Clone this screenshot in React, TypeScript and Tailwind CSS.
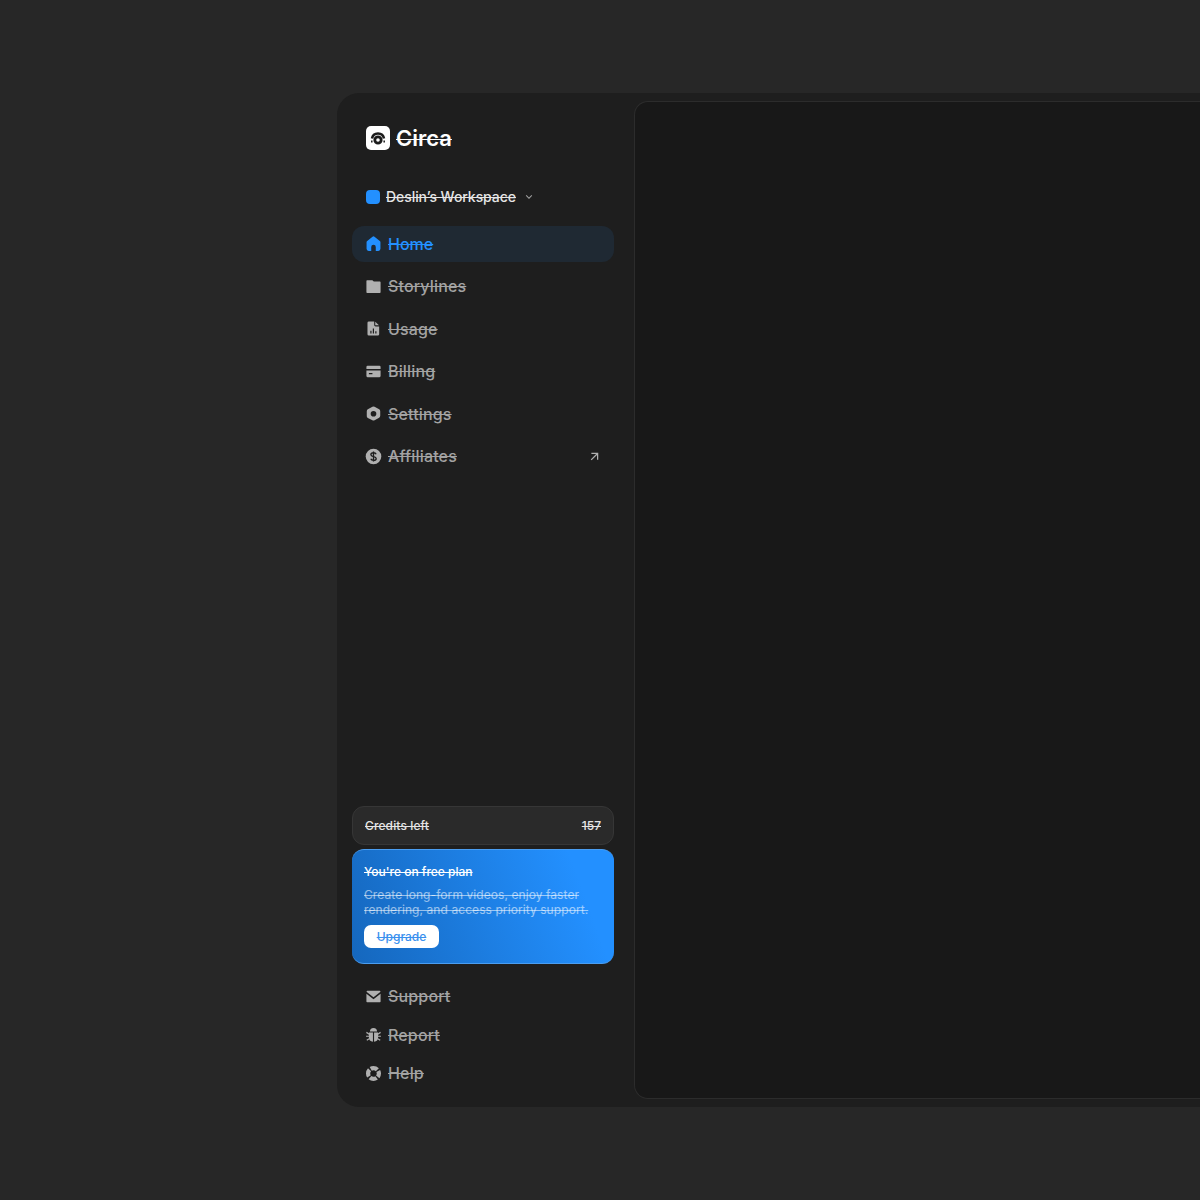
import { RiArrowDownSLine, RiArrowRightUpLine, RiFolderFill } from "react-icons/ri";
import type { ComponentType } from "react";

type IconProps = { className?: string };

function HomeIcon({ className }: IconProps) {
  return (
    <svg viewBox="0 0 24 24" className={className} fill="currentColor">
      <path d="M10.600 2.500a2.200 2.200 0 0 1 2.800 0l7.500 6a2 2 0 0 1 .9 1.700V19.500a3 3 0 0 1-3 3h-3.600v-5.500a3.200 3.200 0 0 0-6.400 0v5.500H5.200a3 3 0 0 1-3-3v-9.300a2 2 0 0 1 .9-1.700z" />
    </svg>
  );
}

function UsageIcon({ className }: IconProps) {
  return (
    <svg viewBox="0 0 24 24" className={className} fill="currentColor" fillRule="evenodd">
      <path d="M5.500 2H13v5a2 2 0 0 0 2 2h5v11a2 2 0 0 1-2 2H5.500a2 2 0 0 1-2-2V4a2 2 0 0 1 2-2zM7.500 15v4h1.700v-4zM11 12v7h1.700v-7zM14.500 16v3h1.700v-3z" />
      <path d="M14.500 2.300 19.700 7.500H15a.5.5 0 0 1-.5-.5z" />
    </svg>
  );
}

function CardIcon({ className }: IconProps) {
  return (
    <svg viewBox="0 0 24 24" className={className} fill="currentColor" fillRule="evenodd">
      <path d="M3.500 4h17a1.500 1.500 0 0 1 1.500 1.500V8.500H2V5.500A1.500 1.500 0 0 1 3.500 4z" />
      <path d="M2 10.500h20v8a1.500 1.500 0 0 1-1.500 1.500h-17A1.500 1.500 0 0 1 2 18.500zM5.500 14v1.800h5V14z" />
    </svg>
  );
}

function SettingsIcon({ className }: IconProps) {
  return (
    <svg viewBox="0 0 24 24" className={className} fill="currentColor" fillRule="evenodd">
      <path d="M10.500 2.400a3 3 0 0 1 3 0l6.500 3.700a3 3 0 0 1 1.500 2.600v6.600a3 3 0 0 1-1.500 2.600l-6.500 3.700a3 3 0 0 1-3 0L4 18.500a3 3 0 0 1-1.500-2.600V8.700A3 3 0 0 1 4 6.100zM12 8.300a4 4 0 1 0 0 8 4 4 0 0 0 0-8z" />
    </svg>
  );
}

function DollarIcon({ className }: IconProps) {
  return (
    <svg viewBox="0 0 24 24" className={className} fill="none">
      <circle cx="12" cy="12" r="11" fill="currentColor" />
      <path d="M15.700 8.800c-.5-1.400-1.900-2.100-3.700-2.100-2.100 0-3.700 1-3.700 2.700 0 3.600 7.500 1.700 7.500 5.300 0 1.700-1.700 2.700-3.800 2.700-1.900 0-3.300-.8-3.800-2.200M12 4.800v14.400" stroke="#1e1e1e" strokeWidth="1.900" />
    </svg>
  );
}

function MailIcon({ className }: IconProps) {
  return (
    <svg viewBox="0 0 24 24" className={className} fill="currentColor">
      <path d="M3.200 4h17.600a1 1 0 0 1 .7 1.700L12 13.200 2.500 5.700A1 1 0 0 1 3.200 4z" />
      <path d="M2 8l10 7.800L22 8v11a1 1 0 0 1-1 1H3a1 1 0 0 1-1-1z" />
    </svg>
  );
}

function BugIcon({ className }: IconProps) {
  return (
    <svg viewBox="0 0 24 24" className={className} fill="currentColor">
      <path d="M7 7.800a5 5 0 0 1 10 0z" />
      <path d="M5.500 9.300h5.700v13a6.500 6.500 0 0 1-5.700-6.400zM12.800 9.300h5.700v6.600a6.500 6.500 0 0 1-5.700 6.400z" />
      <path d="M2 9l4 2.500M22 9l-4 2.500M1.500 14.500H6M22.500 14.500H18M2.500 20l4-2.500M21.500 20l-4-2.500" fill="none" stroke="currentColor" strokeWidth="1.700" />
    </svg>
  );
}

function HelpIcon({ className }: IconProps) {
  return (
    <svg viewBox="0 0 24 24" className={className} fill="none" stroke="currentColor">
      <circle cx="12" cy="12" r="7.600" strokeWidth="6" strokeDasharray="9.940 2" strokeDashoffset="-6.970" />
    </svg>
  );
}

const NAV: { label: string; icon: ComponentType<IconProps>; external?: boolean }[] = [
  { label: "Storylines", icon: RiFolderFill },
  { label: "Usage", icon: UsageIcon },
  { label: "Billing", icon: CardIcon },
  { label: "Settings", icon: SettingsIcon },
  { label: "Affiliates", icon: DollarIcon, external: true },
];

const FOOTER_NAV: { label: string; icon: ComponentType<IconProps> }[] = [
  { label: "Support", icon: MailIcon },
  { label: "Report", icon: BugIcon },
  { label: "Help", icon: HelpIcon },
];

function Logo() {
  return (
    <div className="grid h-6 w-6 place-items-center rounded-[5px] bg-white">
      <svg viewBox="0 0 24 24" className="h-6 w-6" fill="none" stroke="#1c1c1c">
        <path d="M6 12.500c.6-3.400 2.900-5 6-5s5.400 1.600 6 5" strokeWidth="2.600" />
        <circle cx="12" cy="14" r="3.200" strokeWidth="2.800" />
        <path d="M5.800 14.500v2M18.200 14.500v2" strokeWidth="1.500" />
      </svg>
    </div>
  );
}

function NavRow({ label, icon: Icon, external }: { label: string; icon: ComponentType<IconProps>; external?: boolean }) {
  return (
    <div className="flex h-9 items-center rounded-xl px-[13px] text-[#a3a3a3]">
      <Icon className="h-[17px] w-[17px] shrink-0 text-[#b0b0b0]" />
      <span className="ml-[6px] flex-1 text-[16px] font-medium leading-none tracking-[0.01em] line-through decoration-1">{label}</span>
      {external && <RiArrowRightUpLine className="-mr-px h-[15px] w-[15px] text-[#b0b0b0]" />}
    </div>
  );
}

export default function App() {
  return (
    <div className="min-h-[1200px] overflow-hidden bg-[#272727] pl-[337px] pt-[93px] font-['Inter',sans-serif]">
      <div className="flex h-[1014px] w-[863px] rounded-l-[22px] bg-[#1e1e1e]">
        <aside className="flex w-[297px] shrink-0 flex-col pb-[16px] pl-[15px] pr-[20px]">
          <div className="mt-[33px] flex items-center gap-[6px] pl-[14px]">
            <Logo />
            <span className="text-[22px] font-semibold leading-6 text-white line-through decoration-1">Circa</span>
          </div>

          <div className="mt-[38px] flex h-[18px] items-center pl-[14px]">
            <div className="h-[14px] w-[14px] rounded-[4px] bg-[#2390ff]" />
            <span className="ml-[6px] text-[14px] font-medium leading-none tracking-[-0.06px] text-[#e5e5e5] line-through decoration-1">Deslin’s Workspace</span>
            <RiArrowDownSLine className="ml-[7px] h-[12px] w-[12px] text-[#a3a3a3]" />
          </div>

          <nav className="mt-[19.700px] flex flex-col gap-[6.500px]">
            <div className="flex h-9 items-center rounded-xl bg-[#1f2933] px-[13px] text-[#2390ff]">
              <HomeIcon className="h-[17px] w-[17px] shrink-0" />
              <span className="ml-[6px] text-[16px] font-medium leading-none line-through decoration-1">Home</span>
            </div>
            {NAV.map((n) => (
              <NavRow key={n.label} {...n} />
            ))}
          </nav>

          <div className="mt-auto flex flex-col gap-[4px]">
            <div className="flex h-[39px] items-center justify-between rounded-xl border border-[#363636] bg-[#2a2a2a] px-3 text-[12px] font-medium text-[#e5e5e5]">
              <span className="tracking-[0.01em] line-through decoration-1">Credits left</span>
              <span className="line-through decoration-1">157</span>
            </div>
            <div className="h-[115px] rounded-xl border-t border-b border-[#4a9df0] bg-[linear-gradient(70deg,#1567bd,#2390ff_85%)] px-3 pt-[14px]">
              <div className="text-[12px] font-medium leading-4 text-white line-through decoration-1">You're on free plan</div>
              <p className="mt-[7px] text-[12px] leading-[15px] tracking-[0.08px] text-white/55 line-through decoration-1">
                Create long-form videos, enjoy faster rendering, and access priority support.
              </p>
              <div className="mt-[8px] flex h-[23px] w-[75px] items-center justify-center rounded-[7px] bg-white text-[12px] font-medium text-[#3a90ee] line-through decoration-1">
                Upgrade
              </div>
            </div>
          </div>

          <div className="mt-[14px] flex flex-col gap-[2.500px]">
            {FOOTER_NAV.map((n) => (
              <NavRow key={n.label} {...n} />
            ))}
          </div>
        </aside>

        <main className="my-2 flex-1 rounded-l-[14px] border border-r-0 border-[#2c2c2c] bg-[#181818]" />
      </div>
    </div>
  );
}
